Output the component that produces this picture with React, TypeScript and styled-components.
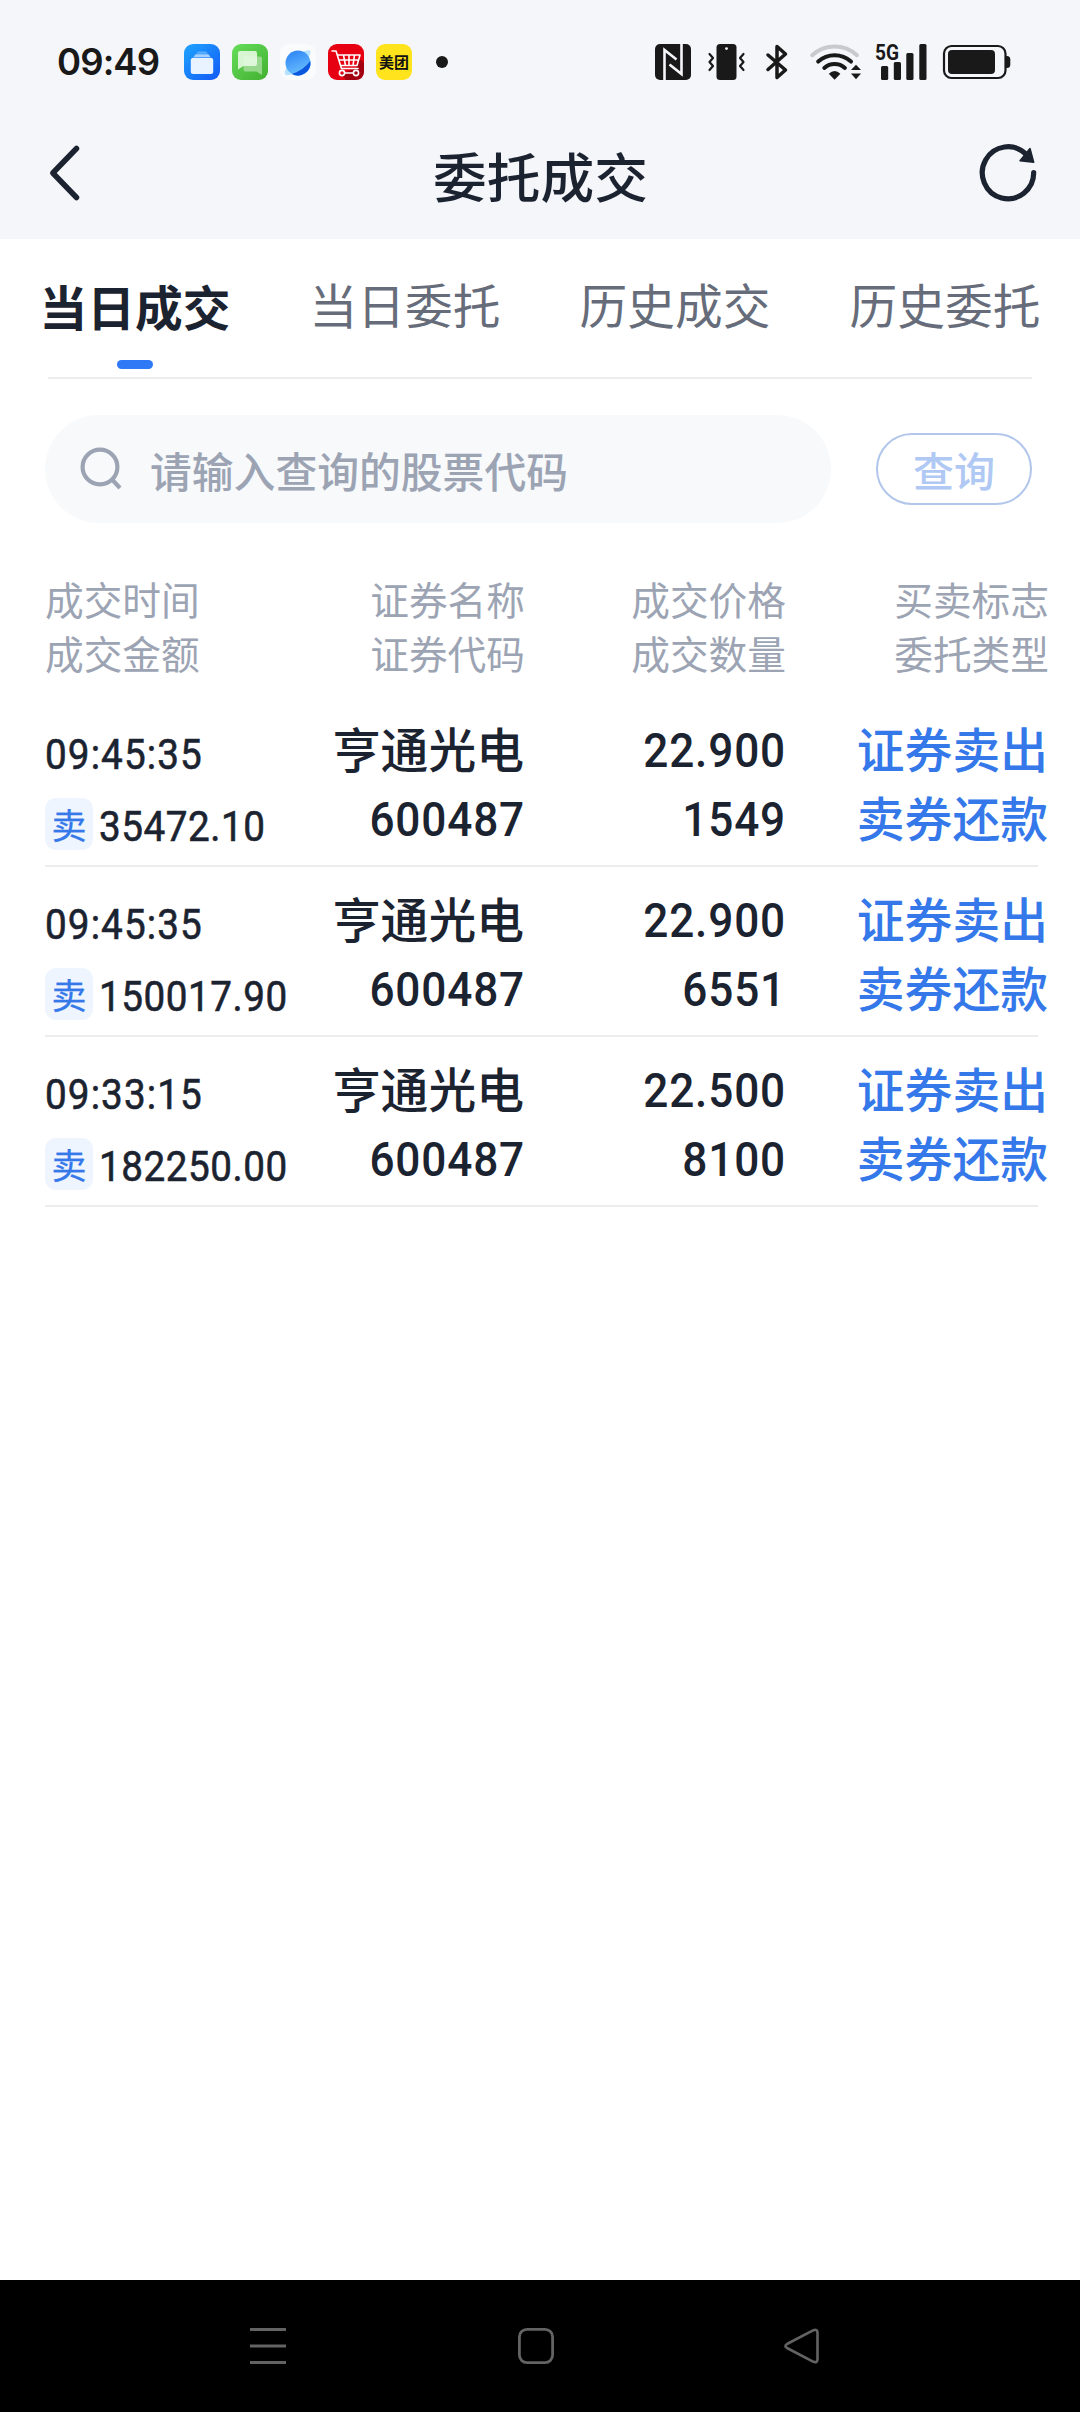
import React from "react";
import styled, { createGlobalStyle } from "styled-components";

const ink = "#1c2330";
const blue = "#3478ea";
const cjk = '"Noto Sans CJK SC", sans-serif';
const digits = 'Roboto, "Noto Sans CJK SC", sans-serif';

const GlobalStyle = createGlobalStyle`
  * { box-sizing: border-box; }
  body { margin: 0; background: #fff; font-family: ${cjk}; color: ${ink}; }
  svg { display: block; flex: none; overflow: visible; }
  button { font: inherit; color: inherit; background: none; border: 0; padding: 0; }
`;

const Screen = styled.div`
  width: 1080px;
  height: 2412px;
  display: flex;
  flex-direction: column;
  overflow: hidden;
`;

const Top = styled.header`
  background: #f5f6fa;
  height: 239px;
`;

const StatusBar = styled.div`
  height: 108px;
  padding: 16px 69px 0 57px;
  display: flex;
  align-items: center;
  justify-content: space-between;
`;

const StatusLeft = styled.div`
  display: flex;
  align-items: center;
`;

const Clock = styled.div`
  width: 127px;
  font: 600 36.5px/44px Inter, sans-serif;
  letter-spacing: -0.9px;
  color: #191919;
`;

const AppIcons = styled.div`
  display: flex;
  gap: 12px;
`;

const Meituan = styled.div`
  width: 36px;
  height: 36px;
  border-radius: 9px;
  background: #ffe31c;
  color: #111;
  font: 700 15px/35px ${cjk};
  text-align: center;
`;

const MoreDot = styled.i`
  width: 12px;
  height: 12px;
  margin-left: 24px;
  border-radius: 50%;
  background: #191919;
`;

const StatusRight = styled.div`
  display: flex;
  align-items: center;
`;

const Slot = styled.div<{ $gap: number }>`
  margin-left: ${(p) => p.$gap}px;
`;

const TitleBar = styled.div`
  height: 130px;
  padding: 0 42px 0 48px;
  display: flex;
  align-items: center;
  justify-content: space-between;
`;

const Title = styled.h1`
  margin: 0 0 0 21px;
  padding-top: 4px;
  font-size: 53.7px;
  line-height: 72px;
  font-weight: 500;
`;

const Tabs = styled.nav`
  height: 138px;
  display: grid;
  grid-template-columns: repeat(4, 270px);
`;

const Tab = styled.button<{ $active?: boolean }>`
  padding-top: ${(p) => (p.$active ? 31 : 29)}px;
  display: flex;
  flex-direction: column;
  align-items: center;
  font-size: 47.7px;
  line-height: 72px;
  font-weight: ${(p) => (p.$active ? 700 : 400)};
  color: ${(p) => (p.$active ? ink : "#666c7a")};
`;

const Indicator = styled.span`
  width: 36px;
  height: 9px;
  margin-top: 18px;
  border-radius: 5px;
  background: #2f79f6;
`;

const Divider = styled.div`
  height: 2px;
  margin: 0 48px;
  background: #ededee;
`;

const SearchRow = styled.div`
  padding: 36px 48px 0 45px;
  display: flex;
  align-items: center;
  justify-content: space-between;
`;

const SearchBox = styled.div`
  width: 786px;
  height: 108px;
  padding-left: 34px;
  display: flex;
  align-items: center;
  gap: 26px;
  border-radius: 54px;
  background: #f7f9fb;
  color: #9ca4b4;
  font-size: 41.8px;
  line-height: 60px;
  font-weight: 500;
`;

const Placeholder = styled.span`
  padding-top: 2px;
`;

const QueryButton = styled.button`
  width: 156px;
  height: 72px;
  border: 2px solid #b1c6ea;
  border-radius: 36px;
  color: #b0c9f4;
  font-size: 41px;
  line-height: 68px;
  font-weight: 500;
`;

const HeadRow = styled.div`
  margin: 48px 0 18px 45px;
  display: grid;
  grid-template-columns: 245px 235px 261px 263px;
  font-size: 38.7px;
  line-height: 54px;
  color: #9ca4b4;
`;

const HeadCell = styled.div<{ $start?: boolean }>`
  text-align: ${(p) => (p.$start ? "left" : "right")};
`;

const TradeRow = styled.div`
  width: 993px;
  height: 170px;
  margin-left: 45px;
  border-bottom: 2px solid #ededee;
  display: grid;
  grid-template-columns: 245px 234px 261px 263px;
`;

const TimeCell = styled.div`
  padding-top: 22px;
  font: 400 42px/72px ${digits};
  -webkit-text-stroke: 0.6px ${ink};
`;

const Narrow = styled.span<{ $spacing: number }>`
  display: inline-block;
  white-space: nowrap;
  letter-spacing: ${(p) => p.$spacing}px;
  transform: scaleX(0.92);
  transform-origin: left center;
`;

const Amount = styled.div`
  display: flex;
  align-items: center;
  gap: 6px;
`;

const SellBadge = styled.span`
  flex: none;
  width: 48px;
  height: 52px;
  margin-bottom: 6px;
  border-radius: 11px;
  background: #eff5fe;
  color: ${blue};
  font: 400 35px/52px ${cjk};
  text-align: center;
  -webkit-text-stroke: 0.3px ${blue};
`;

const Cell = styled.div`
  padding-top: 16px;
  text-align: right;
`;

const Line = styled.div<{ $blue?: boolean }>`
  font-size: 47.8px;
  line-height: 69px;
  font-weight: 500;
  color: ${(p) => (p.$blue ? blue : ink)};
`;

const NumLine = styled.div`
  height: 69px;
  margin-right: -1px;
  padding-top: 3px;
  font: 500 48px/69px ${digits};
  letter-spacing: 0.9px;
  transform: scaleX(0.92);
  transform-origin: right center;
`;

const NavBar = styled.footer`
  height: 132px;
  margin-top: auto;
  padding: 0 261px 0 250px;
  display: flex;
  align-items: center;
  justify-content: space-between;
  background: #000;
`;

const FilesIcon = () => (
  <svg width="36" height="36" viewBox="0 0 36 36">
    <defs>
      <linearGradient id="files" x1="0" y1="0" x2="1" y2="1">
        <stop offset="0" stopColor="#1fa5ff" />
        <stop offset="1" stopColor="#1259f5" />
      </linearGradient>
    </defs>
    <rect width="36" height="36" rx="9" fill="url(#files)" />
    <path d="M14 7.500h8l2 2.300H12z" fill="#5aaefe" />
    <path d="M11.500 10.300h13l2 2.600h-17z" fill="#a5d0ff" />
    <rect x="6.800" y="13.800" width="22.400" height="16.200" rx="2.500" fill="#e9f2ff" />
  </svg>
);

const ChatIcon = () => (
  <svg width="36" height="36" viewBox="0 0 36 36">
    <defs>
      <linearGradient id="chat" x1="0" y1="0" x2="1" y2="1">
        <stop offset="0" stopColor="#66dd5c" />
        <stop offset="1" stopColor="#41b02f" />
      </linearGradient>
    </defs>
    <rect width="36" height="36" rx="9" fill="url(#chat)" />
    <path d="M13 12.500h15q2 0 2 2V31l-5.500-3.500H13.500q-2 0-2-2V14z" fill="#a6dd9c" opacity=".85" />
    <path d="M8 7h15q2 0 2 2v11q0 2-2 2H11.500L6 25.500V9q0-2 2-2z" fill="#e6fae2" opacity=".9" />
  </svg>
);

const PlanetIcon = () => (
  <svg width="36" height="36" viewBox="0 0 36 36">
    <defs>
      <linearGradient id="planet" x1=".3" y1="0" x2=".7" y2="1">
        <stop offset="0" stopColor="#2f86f5" />
        <stop offset="1" stopColor="#6fc4ff" />
      </linearGradient>
    </defs>
    <rect width="36" height="36" rx="9" fill="#fafbfc" />
    <path d="M22 8q8-3 8.500-.500Q31 12 22 22T8 31q-4 1-3-4 1-3 4-6z" fill="#b5e3fd" />
    <circle cx="18" cy="19" r="12.500" fill="url(#planet)" />
    <path d="M30.300 17q-7 9.500-18.500 12.900a12.500 12.500 0 0 0 18.500-12.900z" fill="#0c57e0" />
  </svg>
);

const CartIcon = () => (
  <svg width="36" height="36" viewBox="0 0 36 36">
    <rect width="36" height="36" rx="9" fill="#e60012" />
    <path d="M31 14l5 5v8q0 9-9 9H18l-5-6 15-6z" fill="#a30010" />
    <g fill="none" stroke="#fff" strokeWidth="1.600" strokeLinecap="round" strokeLinejoin="round">
      <path d="M4 7h4l5.500 17.500H30M9.500 11H32l-3 10.500H12.500M11 16h19.500M15.500 11l2 10.500M21 11v10.500M26.500 11l-1.500 10.500" />
      <circle cx="14" cy="29" r="2.600" />
      <circle cx="28" cy="29" r="2.600" />
      <path d="M16.600 29h8.800" />
    </g>
  </svg>
);

const NfcIcon = () => (
  <svg width="36" height="36" viewBox="0 0 36 36">
    <rect width="36" height="36" rx="5" fill="#191919" />
    <path d="M9.500 36V6l12 9.500M26.500 0v30l-12-9.500" fill="none" stroke="#f5f6fa" strokeWidth="2.600" />
  </svg>
);

const VibrateIcon = () => (
  <svg width="37" height="36" viewBox="0 0 37 36">
    <rect x="8.500" width="20" height="36" rx="3.500" fill="#191919" />
    <circle cx="18.500" cy="4.600" r="1.400" fill="#f5f6fa" />
    <path d="M1.500 10l3.500 4-3.500 4 3.500 4-3.500 4M35.500 10l-3.500 4 3.500 4-3.500 4 3.500 4" fill="none" stroke="#191919" strokeWidth="2.200" strokeLinecap="round" strokeLinejoin="round" />
  </svg>
);

const BluetoothIcon = () => (
  <svg width="22" height="36" viewBox="0 0 22 36">
    <path d="M2 11l17.500 15L11 33.500V2.500L19.500 10 2 25.500" fill="none" stroke="#191919" strokeWidth="3.500" strokeLinecap="round" strokeLinejoin="round" />
  </svg>
);

const WifiIcon = () => (
  <svg width="51" height="36" viewBox="0 0 51 36">
    <g fill="none" strokeWidth="4" strokeLinecap="round">
      <path d="M2.200 11.200a33 33 0 0 1 44.800 0" stroke="#c9cacd" />
      <path d="M8.200 17.600a24.500 24.500 0 0 1 32.800 0" stroke="#191919" />
      <path d="M14.300 24a15.500 15.500 0 0 1 20.600 0" stroke="#191919" />
    </g>
    <path d="M18.800 29.800q5.800-5.600 11.600 0l-5.800 6z" fill="#191919" />
    <path d="M41 26l5-5.200 5 5.200zM41 29.600h10l-5 5.600z" fill="#191919" />
  </svg>
);

const SignalIcon = () => (
  <svg width="53" height="38" viewBox="0 0 53 38">
    <g fill="#191919">
      <text x="0" y="16.500" fontFamily="Roboto, sans-serif" fontWeight="700" fontSize="22" textLength="24" lengthAdjust="spacingAndGlyphs">5G</text>
      <rect x="6" y="23" width="7.200" height="14" rx="1.500" />
      <rect x="18.800" y="19" width="7.200" height="18" rx="1.500" />
      <rect x="31.300" y="10" width="7.200" height="27" rx="1.500" />
      <rect x="44.300" y="1" width="7.200" height="36" rx="1.500" />
    </g>
  </svg>
);

const BatteryIcon = () => (
  <svg width="68" height="34" viewBox="0 0 68 34">
    <rect x="1" y="1" width="61.500" height="32" rx="7.500" fill="none" stroke="#191919" strokeWidth="2.200" />
    <rect x="5" y="5" width="47" height="24" rx="4" fill="#191919" />
    <path d="M62.500 11h1.500q3.300 0 3.300 3.500v5q0 3.500-3.300 3.500h-1.500z" fill="#191919" />
  </svg>
);

const BackIcon = () => (
  <svg width="34" height="56" viewBox="0 0 34 56">
    <path d="M28.500 3.500L4.800 28l23.700 24.500" fill="none" stroke={ink} strokeWidth="5.500" strokeLinecap="round" strokeLinejoin="round" />
  </svg>
);

const RefreshIcon = () => (
  <svg width="60" height="60" viewBox="0 0 60 60">
    <path d="M55.700 29.500A25.700 26 0 1 1 48 11.200" fill="none" stroke={ink} strokeWidth="5.200" strokeLinecap="round" />
    <path d="M52 5.500l3.700 13.800-13.700-1.600z" fill={ink} stroke={ink} strokeWidth="1.500" strokeLinejoin="round" />
  </svg>
);

const SearchIcon = () => (
  <svg width="45" height="46" viewBox="0 0 45 46">
    <circle cx="21" cy="21" r="17.400" fill="none" stroke="#9ca4b4" strokeWidth="4.200" />
    <path d="M33.500 34l7.500 8" stroke="#9ca4b4" strokeWidth="4.200" />
  </svg>
);

const MenuIcon = () => (
  <svg width="38" height="36" viewBox="0 0 38 36">
    <path d="M0 1.500h36M0 18h36M0 34.500h36" stroke="#636363" strokeWidth="3" />
  </svg>
);

const HomeIcon = () => (
  <svg width="36" height="36" viewBox="0 0 36 36">
    <rect x="1.400" y="1.400" width="33.200" height="33.200" rx="7.500" fill="none" stroke="#636363" strokeWidth="2.800" />
  </svg>
);

const NavBackIcon = () => (
  <svg width="35" height="36" viewBox="0 0 35 36">
    <path d="M29.500 2.200L3 16q-3.200 2 0 4l26.500 13.800q4 1.200 4-2.500V4.700q0-3.700-4-2.500z" fill="none" stroke="#636363" strokeWidth="2.600" strokeLinejoin="round" />
  </svg>
);

const tabs = ["当日成交", "当日委托", "历史成交", "历史委托"];

const heads = [
  ["成交时间", "成交金额"],
  ["证券名称", "证券代码"],
  ["成交价格", "成交数量"],
  ["买卖标志", "委托类型"],
];

const trades = [
  { time: "09:45:35", amount: "35472.10", price: "22.900", qty: "1549" },
  { time: "09:45:35", amount: "150017.90", price: "22.900", qty: "6551" },
  { time: "09:33:15", amount: "182250.00", price: "22.500", qty: "8100" },
];

export default function App() {
  return (
    <Screen>
      <GlobalStyle />
      <Top>
        <StatusBar>
          <StatusLeft>
            <Clock>09:49</Clock>
            <AppIcons>
              <FilesIcon />
              <ChatIcon />
              <PlanetIcon />
              <CartIcon />
              <Meituan>美团</Meituan>
            </AppIcons>
            <MoreDot />
          </StatusLeft>
          <StatusRight>
            <NfcIcon />
            <Slot $gap={17}><VibrateIcon /></Slot>
            <Slot $gap={21}><BluetoothIcon /></Slot>
            <Slot $gap={22}><WifiIcon /></Slot>
            <Slot $gap={14}><SignalIcon /></Slot>
            <Slot $gap={15}><BatteryIcon /></Slot>
          </StatusRight>
        </StatusBar>
        <TitleBar>
          <BackIcon />
          <Title>委托成交</Title>
          <RefreshIcon />
        </TitleBar>
      </Top>

      <Tabs>
        {tabs.map((t, i) => (
          <Tab key={t} $active={i === 0}>
            {t}
            {i === 0 && <Indicator />}
          </Tab>
        ))}
      </Tabs>
      <Divider />

      <SearchRow>
        <SearchBox>
          <SearchIcon />
          <Placeholder>请输入查询的股票代码</Placeholder>
        </SearchBox>
        <QueryButton>查询</QueryButton>
      </SearchRow>

      <HeadRow>
        {heads.map(([a, b], i) => (
          <HeadCell key={a} $start={i === 0}>
            <div>{a}</div>
            <div>{b}</div>
          </HeadCell>
        ))}
      </HeadRow>

      {trades.map((t) => (
        <TradeRow key={t.amount}>
          <TimeCell>
            <Narrow $spacing={1.2}>{t.time}</Narrow>
            <Amount>
              <SellBadge>卖</SellBadge>
              <Narrow $spacing={0.6}>{t.amount}</Narrow>
            </Amount>
          </TimeCell>
          <Cell>
            <Line>亨通光电</Line>
            <NumLine>600487</NumLine>
          </Cell>
          <Cell>
            <NumLine>{t.price}</NumLine>
            <NumLine>{t.qty}</NumLine>
          </Cell>
          <Cell>
            <Line $blue>证券卖出</Line>
            <Line $blue>卖券还款</Line>
          </Cell>
        </TradeRow>
      ))}

      <NavBar>
        <MenuIcon />
        <HomeIcon />
        <NavBackIcon />
      </NavBar>
    </Screen>
  );
}
